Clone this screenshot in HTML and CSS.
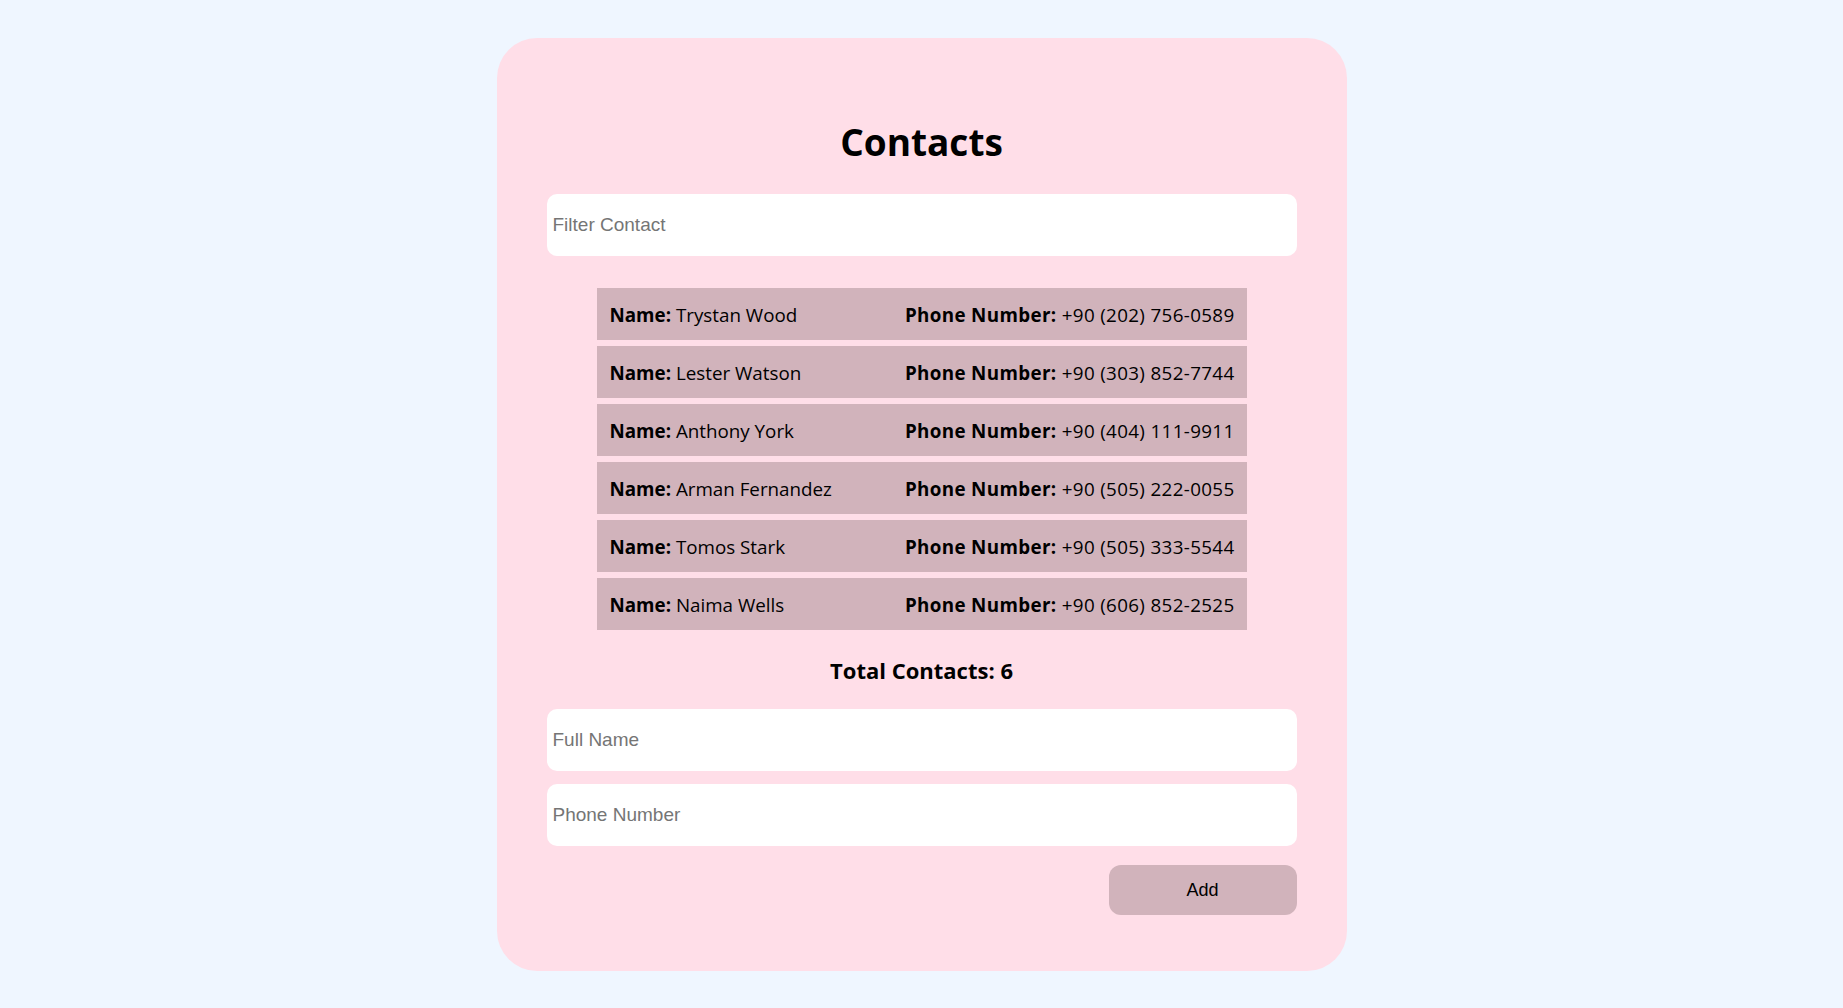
FILE: index.html
```html
<!DOCTYPE html>
<html lang="en">
<head>
<meta charset="utf-8">
<title>Contacts</title>
<link rel="stylesheet" href="styles.css">
</head>
<body>
<div class="page">
  <main class="card">
    <h1 class="title">Contacts</h1>
    <input class="field" type="text" placeholder="Filter Contact">
    <ul class="list">
      <li class="row"><span><b>Name:</b> Trystan Wood</span><span class="phone"><b>Phone Number:</b> +90 (202) 756-0589</span></li>
      <li class="row"><span><b>Name:</b> Lester Watson</span><span class="phone"><b>Phone Number:</b> +90 (303) 852-7744</span></li>
      <li class="row"><span><b>Name:</b> Anthony York</span><span class="phone"><b>Phone Number:</b> +90 (404) 111-9911</span></li>
      <li class="row"><span><b>Name:</b> Arman Fernandez</span><span class="phone"><b>Phone Number:</b> +90 (505) 222-0055</span></li>
      <li class="row"><span><b>Name:</b> Tomos Stark</span><span class="phone"><b>Phone Number:</b> +90 (505) 333-5544</span></li>
      <li class="row"><span><b>Name:</b> Naima Wells</span><span class="phone"><b>Phone Number:</b> +90 (606) 852-2525</span></li>
    </ul>
    <h3 class="total">Total Contacts: 6</h3>
    <form class="form">
      <input class="field" type="text" placeholder="Full Name">
      <input class="field" type="text" placeholder="Phone Number">
      <div class="actions"><button class="add" type="button">Add</button></div>
    </form>
  </main>
</div>
</body>
</html>
```
FILE: styles.css
```css
* { box-sizing: border-box; }
body {
  margin: 0;
  background: #eff6ff;
  font-family: "Open Sans", "Noto Sans", sans-serif;
  color: #000;
}
.page {
  display: flex;
  justify-content: center;
  padding-top: 38px;
}
.card {
  width: 850px;
  background: #ffdee8;
  border-radius: 40px;
  padding: 80px 50px 56px;
}
.title {
  margin: 0 0 28px;
  font-size: 37px;
  line-height: 48px;
  font-weight: 700;
  text-align: center;
}
.field {
  display: block;
  width: 100%;
  height: 62px;
  border: none;
  border-radius: 10px;
  background: #fff;
  padding: 0 6px;
  font-family: "Liberation Sans", Arial, sans-serif;
  font-size: 19px;
  outline: none;
}
.field::placeholder { color: #757575; }
.list {
  list-style: none;
  margin: 32px 0 0;
  padding: 0 50px;
  display: flex;
  flex-direction: column;
  gap: 6px;
}
.row {
  height: 52px;
  background: #d1b3bb;
  display: flex;
  align-items: center;
  justify-content: space-between;
  padding: 2px 12px 0 13px;
  font-size: 18.8px;
}
.row b { font-weight: 700; }
.phone { letter-spacing: 0.35px; }
.total {
  margin: 25px 0 24px;
  font-size: 22px;
  line-height: 30px;
  font-weight: 700;
  text-align: center;
}
.form {
  display: flex;
  flex-direction: column;
  gap: 13px;
}
.actions {
  display: flex;
  justify-content: flex-end;
  margin-top: 6px;
}
.add {
  width: 188px;
  height: 50px;
  border: none;
  border-radius: 12px;
  background: #d1b3bb;
  font-family: "Liberation Sans", Arial, sans-serif;
  font-size: 18px;
  color: #000;
}
```
